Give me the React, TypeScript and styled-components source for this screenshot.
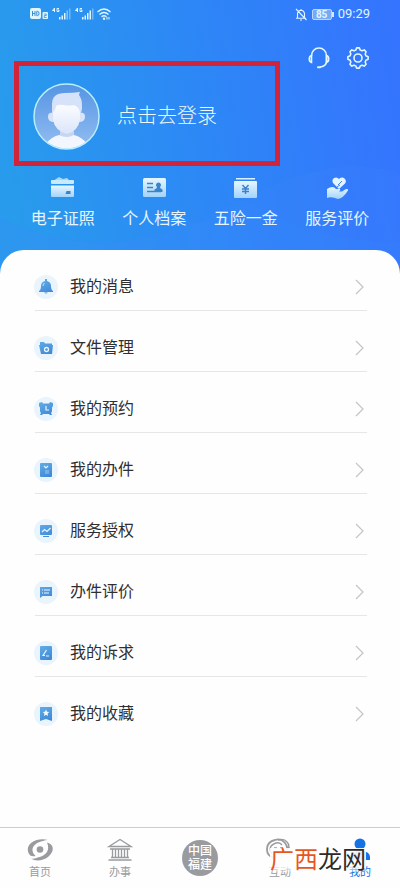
import React from 'react';
import styled, { createGlobalStyle } from 'styled-components';

const GlobalStyle = createGlobalStyle`
  *, *::before, *::after { box-sizing: border-box; }
  body {
    margin: 0;
    background: #fefefe;
    font-family: Roboto, "Noto Sans CJK SC", sans-serif;
    color: #2f2f31;
  }
  button { font: inherit; color: inherit; background: none; border: 0; padding: 0; cursor: pointer; }
  a { color: inherit; text-decoration: none; }
  ul { list-style: none; margin: 0; padding: 0; }
  svg { display: block; flex: none; }
`;

const Page = styled.div`
  position: relative;
  min-height: 100vh;
  display: flex;
  flex-direction: column;
`;

const Backdrop = styled.svg`
  position: absolute;
  inset: 0 0 auto 0;
  width: 100%;
  height: 320px;
  z-index: -1;
`;

const StatusBar = styled.div`
  height: 28px;
  padding: 0 30px;
  display: flex;
  align-items: center;
  justify-content: space-between;
  color: #e0f6ff;
`;

const StatusGroup = styled.div`
  display: flex;
  align-items: center;
  gap: 5px;
`;

const Clock = styled.span`
  font-size: 13px;
  line-height: 16px;
`;

const Header = styled.header`
  display: flex;
  justify-content: space-between;
  align-items: flex-start;
  padding: 0 31px 0 14px;
`;

const LoginButton = styled.button.attrs({ type: 'button' })`
  && {
    margin-top: 33px;
    flex: 0 1 266px;
    height: 105px;
    border: 5px solid #d0243b;
    padding: 5px 0 0 14px;
    display: flex;
    align-items: center;
    gap: 17px;
    color: #eefaff;
    font-size: 20px;
    line-height: 28px;
    font-weight: 300;
  }
`;

const ToolButton = styled.button.attrs({ type: 'button' })`
  width: 22px;
  height: 22px;
`;

const Tools = styled.div`
  margin-top: 19px;
  display: flex;
  gap: 17px;
`;

const QuickRow = styled.nav`
  display: grid;
  grid-template-columns: repeat(4, 1fr);
  padding: 10px 17px 19px;
`;

const QuickLink = styled.a`
  && { color: #e6f5ff; }
  display: flex;
  flex-direction: column;
  align-items: center;
  gap: 8px;
  font-size: 16px;
  line-height: 24px;
`;

const Panel = styled.main`
  flex: 1;
  background: #fefefe;
  border-radius: 24px 24px 0 0;
  padding: 0 33px 0 35px;
`;

const MenuItem = styled.li`
  height: 61px;
  padding-top: 13px;
  border-bottom: 1px solid #e6e6e9;
  &:last-child { border-bottom-color: transparent; }
`;

const MenuLink = styled.a`
  height: 47px;
  display: flex;
  align-items: center;
  font-size: 16px;
  line-height: 24px;
`;

const IconDisc = styled.span`
  width: 24px;
  height: 24px;
  margin: 0 12px 0 -1px;
  border-radius: 50%;
  background: #e9f4fd;
  display: grid;
  place-items: center;
`;

const MenuLabel = styled.span`
  flex: 1;
`;

const TabBar = styled.nav`
  position: relative;
  height: 61px;
  border-top: 1px solid #cdcdcf;
  background: #fefefe;
  display: grid;
  grid-template-columns: repeat(5, 1fr);
`;

const Tab = styled.a<{ $active?: boolean }>`
  && { color: ${(p) => (p.$active ? '#1673e6' : '#999b9f')}; }
  display: flex;
  flex-direction: column;
  align-items: center;
  padding-top: 10px;
  gap: 3px;
  font-size: 11px;
  line-height: 16px;
`;

const Seal = styled.span`
  width: 36px;
  height: 36px;
  margin-top: 2px;
  border-radius: 50%;
  background: #999b9f;
  color: #fff;
  display: grid;
  place-content: center;
  font-size: 12px;
  line-height: 14px;
  font-weight: 500;
  text-align: center;
`;

const Watermark = styled.div`
  position: absolute;
  right: 34px;
  top: 20px;
  font-size: 24px;
  line-height: 24px;
  color: #2d2b2a;
  background: linear-gradient(rgba(254, 254, 254, 0.9) 75%, rgba(254, 254, 254, 0.2));
  pointer-events: none;
`;

const WatermarkAccent = styled.span`
  color: #e8561f;
`;

const PhoneStatusIcons = () => (
  <svg width="82" height="14" viewBox="0 0 82 14" fill="currentColor" aria-hidden="true">
    <rect x="0" y="1" width="11" height="11" rx="2" />
    <path d="M2.500 4v5M5 4v5M2.500 6.500H5M6.800 4.300v4.400h.7q1.500 0 1.500-2.200T7.500 4.300z" fill="none" stroke="#3a8ed8" />
    <rect x="12.500" y="5" width="5.500" height="7" rx="1" />
    <path d="M14 7h2.300v1.500H14.300V10.500h2.300" fill="none" stroke="#3a8ed8" strokeWidth=".8" />
    {[22, 45].map((x) => (
      <g key={x} transform={`translate(${x} 0)`}>
        <path d="M2.500 5V1L.5 3.500H3M7 1.500H5V4.500H7V3H6" fill="none" stroke="currentColor" />
        <rect x="7" y="10" width="1.500" height="2.500" />
        <rect x="9.500" y="8.500" width="1.500" height="4" />
        <rect x="12" y="6" width="1.500" height="6.500" />
        <rect x="14.500" y="3.500" width="1.500" height="9" opacity={x === 22 ? 0.5 : 1} />
        <rect x="17" y="1.500" width="1.500" height="11" opacity=".4" />
      </g>
    ))}
    <g fill="none" stroke="currentColor" strokeWidth="1.400">
      <path d="M67.500 5q6.500-6 13 0M69.500 7.500q4.500-4 9 0M71.500 9.800q2.500-2 5 0" />
    </g>
    <circle cx="74" cy="11.800" r="1.200" />
    <path d="M77 12.500v-2.500M79 12.500v-2.500" stroke="currentColor" />
  </svg>
);

const MutedBell = () => (
  <svg width="12" height="13" viewBox="0 0 12 13" fill="none" stroke="currentColor" strokeWidth="1.100" aria-hidden="true">
    <path d="M1 10.300h10M2.500 10V5.500Q3 2.500 6 2.300q3 .2 3.500 3.200V10M6 1v1.300M5 12h2M1 1l10.500 11" />
  </svg>
);

const BatteryShell = styled.span`
  position: relative;
  width: 20px;
  height: 11px;
  margin-right: 1px;
  border: 1px solid #b9d7fb;
  border-radius: 2px;
  background: #79a9f4;
  font-size: 10px;
  line-height: 9px;
  font-weight: 700;
  text-align: center;
  &::after {
    content: '';
    position: absolute;
    right: -3px;
    top: 2px;
    width: 2px;
    height: 5px;
    background: #d5e7fd;
  }
`;

const Avatar = () => (
  <svg width="67" height="67" viewBox="0 0 67 67" aria-hidden="true">
    <defs>
      <linearGradient id="avatarBg" x1="0" y1="0" x2="0" y2="1">
        <stop offset="0" stopColor="#5595e4" />
        <stop offset="1" stopColor="#93bdf1" />
      </linearGradient>
      <linearGradient id="face" x1="0" y1="0" x2="0" y2="1">
        <stop offset="0" stopColor="#fbfcff" />
        <stop offset="1" stopColor="#dbe5fa" />
      </linearGradient>
      <clipPath id="avatarClip"><circle cx="33.500" cy="33.500" r="32" /></clipPath>
    </defs>
    <circle cx="33.500" cy="33.500" r="32" fill="url(#avatarBg)" />
    <g clipPath="url(#avatarClip)">
      <path d="M27 46h14v8q9 1 14 7v8H12v-8q5-6 15-8z" fill="#c6d5f3" />
      <path d="M26 52q8 4 15 0 8 2 13 9v8H13v-8q5-7 13-9z" fill="#f3f6fe" />
      <path d="M20 30q-5-1-5 4 0 5 6 5zM47 30q5-1 5 4 0 5-6 5z" fill="#d9e4fa" />
      <path d="M19 34V21Q19 10 32 10q8 0 15-1-1 2-1 3 3 4 3 10v4l-2 8z" fill="#d6e2f9" />
      <path d="M20 29q2-1 3-6 3-2 7-1 7 1 11 0 5 2 6 7v8q-2 11-13 14-12-3-14-14z" fill="url(#face)" />
    </g>
    <circle cx="33.500" cy="33.500" r="32.500" fill="none" stroke="#b9f0fd" strokeWidth="1.500" />
  </svg>
);

const Headset = () => (
  <svg width="22" height="22" viewBox="0 0 22 22" fill="none" stroke="#e3f7ff" strokeWidth="1.600" strokeLinecap="round" aria-hidden="true">
    <path d="M3.500 8.500a7.500 7.500 0 0 1 15 0v5.500q0 5-6 6" />
    <path d="M3.500 8.500C.8 9 .3 14.500 3.500 15.500zM18.500 8.500c2.700.5 3.200 6 0 7z" />
    <path d="M10 20.200h2" strokeWidth="2" />
  </svg>
);

const gearPoints = () => {
  const teeth = 8;
  const points: string[] = [];
  for (let i = 0; i < teeth; i += 1) {
    [[-0.28, 8.200], [-0.13, 10.200], [0.13, 10.200], [0.28, 8.200]].forEach(([offset, radius]) => {
      const angle = (i / teeth) * Math.PI * 2 + offset;
      points.push(`${11 + Math.sin(angle) * radius},${11 - Math.cos(angle) * radius}`);
    });
  }
  return points.join(' ');
};

const Gear = () => (
  <svg width="22" height="22" viewBox="0 0 22 22" fill="none" stroke="#e3f7ff" strokeWidth="1.600" strokeLinejoin="round" aria-hidden="true">
    <polygon points={gearPoints()} />
    <circle cx="11" cy="11" r="4" />
  </svg>
);

const quickIcons: Record<string, React.ReactNode> = {
  wallet: (
    <>
      <path d="M3 5l6-4 4 2 4-1 3 3z" fill="#a8d8fa" />
      <rect x="1" y="4" width="23" height="4" rx="1" fill="#c9eafd" />
      <path d="M1 9.500h23V20q0 1-1 1H2q-1 0-1-1z" fill="url(#quick)" />
      <path d="M16.500 15h4v3h-5z" fill="#3b83cc" />
    </>
  ),
  card: (
    <>
      <rect x="1" y="2" width="23" height="19" rx="1.500" fill="url(#quick)" />
      <path d="M5 7.500h6M5 11.500h6M5 15.500h14" stroke="#3b83cc" strokeWidth="1.300" />
      <path d="M16.500 6.500a2.500 2.500 0 0 1 1.500 4.500q0 1.500 2.500 2.500v2.500h-8v-2.500q2.500-1 2.500-2.500a2.500 2.500 0 0 1 1.500-4.500z" fill="#3b83cc" />
    </>
  ),
  fund: (
    <>
      <path d="M3 2h19v1.500H3z" fill="#d9f2ff" />
      <path d="M2 5h21q1 0 1 1v15q0 1-1 1H2q-1 0-1-1V6q0-1 1-1z" fill="url(#quick)" />
      <path d="M9.500 9l3 3.500 3-3.500M9 13h7M9 15.500h7M12.500 12.500V18" fill="none" stroke="#3b7fd0" strokeWidth="1.400" />
    </>
  ),
  care: (
    <>
      <path d="M14 13L8 7q-1.500-3 1-5 3-1.500 5 1 3-2.500 5.500-.5 2.500 2.500.5 5z" fill="#e3f6ff" />
      <path d="M17 5l-4 4M15 9l-3 2" fill="none" stroke="#3b83ee" />
      <path d="M2 13q6-4 9 0h4q1 1-1 2.500h3l4-2.500q3-.5 2 1.500-5 8-10 8.500-7-3-11-1z" fill="url(#quick)" />
    </>
  ),
};

const QuickIcon = ({ name }: { name: string }) => (
  <svg width="25" height="23" viewBox="0 0 25 23" aria-hidden="true">
    <defs>
      <linearGradient id="quick" x1="0" y1="0" x2="0" y2="1">
        <stop offset="0" stopColor="#e6f7ff" />
        <stop offset="1" stopColor="#a3d3fa" />
      </linearGradient>
    </defs>
    {quickIcons[name]}
  </svg>
);

const menuIcons: Record<string, React.ReactNode> = {
  bell: (
    <>
      <path d="M7 0h2v2q4 1 4 5 0 4 2 5H1q2-1 2-5 0-4 4-5z" />
      <path d="M1 12h14v1H1zM6 13.500h4q-2 2-4 0z" />
      <path d="M5 7q0-2 1.500-3" fill="none" stroke="#cfe6fb" />
    </>
  ),
  folder: (
    <>
      <path d="M2 2h4l1 1.500h7V5H2z" />
      <path d="M1 5h14l-1 9H3z" />
      <circle cx="8.500" cy="9.500" r="2" fill="none" stroke="#e9f6ff" strokeWidth="1.300" />
    </>
  ),
  alarm: (
    <>
      <path d="M1 2l3-1 1 1.500h6L12 1l3 1v3l-1 1.500v4l-1 1.500 1 2h-2l-1-1H5l-1 1H2l1-2-1-1.500v-4L1 5z" />
      <path d="M8 5v4h3" fill="none" stroke="#e9f6ff" strokeWidth="1.200" />
    </>
  ),
  clipboard: (
    <>
      <rect x="2" y="1" width="12" height="14" rx="1" />
      <path d="M6 4l2 2 2-2" fill="none" stroke="#e9f6ff" strokeWidth="1.200" />
      <path d="M7 9h4M7 11h4" stroke="#9cccf3" />
    </>
  ),
  screen: (
    <>
      <rect x="2" y="2" width="12" height="10" rx="1" />
      <path d="M4 9l2.500-2.500L9 8.500 12.500 5" fill="none" stroke="#e9f6ff" strokeWidth="1.200" />
      <path d="M5 13h6v1H5z" />
    </>
  ),
  comment: (
    <>
      <path d="M2 3h12v9H4.500L2 14z" />
      <path d="M4 6h1M6 6h6M4 9h1M6 9h5" stroke="#e9f6ff" />
    </>
  ),
  pen: (
    <>
      <rect x="2" y="1" width="12" height="14" rx="1" />
      <path d="M8.500 5L5 10.500h2M8 11h3" fill="none" stroke="#e9f6ff" strokeWidth="1.200" />
    </>
  ),
  bookmark: (
    <>
      <path d="M2 1h12v14l-6-2-6 2z" />
      <path d="M8 3.500l1 2.200 2.300.3-1.700 1.600.4 2.400-2-1.200-2 1.200.4-2.400L4.700 6 7 5.700z" fill="#f2faff" />
    </>
  ),
};

const MenuIcon = ({ name }: { name: string }) => (
  <svg width="16" height="16" viewBox="0 0 16 16" fill="url(#menu)" aria-hidden="true">
    <defs>
      <linearGradient id="menu" gradientUnits="userSpaceOnUse" x1="2" y1="0" x2="10" y2="16">
        <stop offset="0" stopColor="#62aee8" />
        <stop offset="1" stopColor="#3f87d6" />
      </linearGradient>
    </defs>
    {menuIcons[name]}
  </svg>
);

const Chevron = () => (
  <svg width="12" height="16" viewBox="0 0 12 16" fill="none" stroke="#c4c4c6" strokeWidth="1.200" aria-hidden="true">
    <path d="M1 1l7 7-7 7" />
  </svg>
);

const HomeIcon = () => (
  <svg width="26" height="24" viewBox="0 0 26 24" fill="currentColor" aria-hidden="true">
    <path d="M2 16C-3 7 8-1 21 2q-3 0-5 1C10 4 5 8 5.500 12.500q0 3 3 5.500-5 1-6.500-2z" />
    <path d="M20 4.500c8 2 7 10 1 14.500-5 4-13 4.500-17 1.500 3 .5 5 0 6.500-1 8-1.500 13-7 9.500-15z" />
    <circle cx="13" cy="11.500" r="3.300" />
  </svg>
);

const HallIcon = () => (
  <svg width="26" height="24" viewBox="0 0 26 24" fill="none" stroke="currentColor" strokeWidth="1.300" aria-hidden="true">
    <path d="M2 8.500L13 1.500l11 7zM3 11h20M5.500 11v8M8.500 11v8M11.500 11v8M14.500 11v8M17.500 11v8M20.500 11v8M4 19.500h18M1.500 22h23" />
  </svg>
);

const InteractIcon = () => (
  <svg width="30" height="24" viewBox="0 0 30 24" fill="none" stroke="currentColor" strokeWidth="1.800" aria-hidden="true">
    <path d="M9 20C-1 17 0 4 10 2q6-2 10 3 3 4 2 7" />
    <path d="M7 16Q2 8 11 5q4-1 6 2M13 2q6-2 9 2 3 3 1 7M9 10h3M15 10h3M21 10h4" strokeWidth="1.400" />
  </svg>
);

const PersonIcon = () => (
  <svg width="26" height="24" viewBox="0 0 26 24" fill="currentColor" aria-hidden="true">
    <circle cx="13" cy="6" r="5.500" />
    <path d="M3 22v-3q0-6 10-6t10 6v3z" />
  </svg>
);

const quickLinks = [
  { icon: 'wallet', label: '电子证照' },
  { icon: 'card', label: '个人档案' },
  { icon: 'fund', label: '五险一金' },
  { icon: 'care', label: '服务评价' },
];

const menu = [
  { icon: 'bell', label: '我的消息' },
  { icon: 'folder', label: '文件管理' },
  { icon: 'alarm', label: '我的预约' },
  { icon: 'clipboard', label: '我的办件' },
  { icon: 'screen', label: '服务授权' },
  { icon: 'comment', label: '办件评价' },
  { icon: 'pen', label: '我的诉求' },
  { icon: 'bookmark', label: '我的收藏' },
];

export default function App() {
  return (
    <>
      <GlobalStyle />
      <Page>
        <Backdrop viewBox="0 0 400 320" preserveAspectRatio="none" aria-hidden="true">
          <defs>
            <linearGradient id="sky" gradientUnits="userSpaceOnUse" x1="0" y1="120" x2="400" y2="60">
              <stop offset="0" stopColor="#289bec" />
              <stop offset="0.500" stopColor="#2d87f6" />
              <stop offset="1" stopColor="#3574fe" />
            </linearGradient>
          </defs>
          <rect width="400" height="320" fill="url(#sky)" />
          <path d="M0 218Q70 250 130 240C220 225 270 170 350 166q30 0 50 8v146H0z" fill="#4a86ff" opacity=".14" />
          <path d="M0 218Q70 250 130 240q60-10 120-38 60 40 150 40v78H0z" fill="#3f8fff" opacity=".1" />
        </Backdrop>

        <StatusBar>
          <PhoneStatusIcons />
          <StatusGroup>
            <MutedBell />
            <BatteryShell>85</BatteryShell>
            <Clock>09:29</Clock>
          </StatusGroup>
        </StatusBar>

        <Header>
          <LoginButton>
            <Avatar />
            点击去登录
          </LoginButton>
          <Tools>
            <ToolButton aria-label="客服"><Headset /></ToolButton>
            <ToolButton aria-label="设置"><Gear /></ToolButton>
          </Tools>
        </Header>

        <QuickRow>
          {quickLinks.map((item) => (
            <QuickLink href="#" key={item.icon}>
              <QuickIcon name={item.icon} />
              {item.label}
            </QuickLink>
          ))}
        </QuickRow>

        <Panel>
          <ul>
            {menu.map((item) => (
              <MenuItem key={item.icon}>
                <MenuLink href="#">
                  <IconDisc><MenuIcon name={item.icon} /></IconDisc>
                  <MenuLabel>{item.label}</MenuLabel>
                  <Chevron />
                </MenuLink>
              </MenuItem>
            ))}
          </ul>
        </Panel>

        <TabBar>
          <Tab href="#"><HomeIcon />首页</Tab>
          <Tab href="#"><HallIcon />办事</Tab>
          <Tab href="#"><Seal>中国<br />福建</Seal></Tab>
          <Tab href="#"><InteractIcon />互动</Tab>
          <Tab href="#" $active><PersonIcon />我的</Tab>
          <Watermark><WatermarkAccent>广西</WatermarkAccent>龙网</Watermark>
        </TabBar>
      </Page>
    </>
  );
}
